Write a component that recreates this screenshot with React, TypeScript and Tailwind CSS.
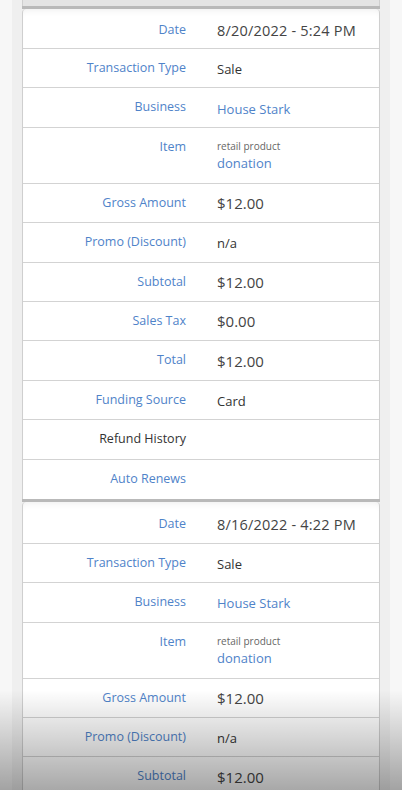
import React from "react";

type Row = { label: string; value?: React.ReactNode; labelDark?: boolean; tall?: boolean };

const money = (v: string) => <span className="text-[15px] text-[#444]">{v}</span>;
const plain = (v: string) => <span className="text-[13px] text-[#333]">{v}</span>;

const rows = (date: string): Row[] => [
  { label: "Date", value: <span className="text-[14.5px] tracking-[0.2px] text-[#444]">{date}</span> },
  { label: "Transaction Type", value: plain("Sale") },
  { label: "Business", value: <span className="text-[13px] text-[#4f83c9]">House Stark</span> },
  {
    label: "Item",
    tall: true,
    value: (
      <div className="flex flex-col leading-none">
        <span className="text-[10px] text-[#666]">retail product</span>
        <span className="mt-[6px] text-[13px] text-[#4f83c9]">donation</span>
      </div>
    ),
  },
  { label: "Gross Amount", value: money("$12.00") },
  { label: "Promo (Discount)", value: plain("n/a") },
  { label: "Subtotal", value: money("$12.00") },
  { label: "Sales Tax", value: money("$0.00") },
  { label: "Total", value: money("$12.00") },
  { label: "Funding Source", value: plain("Card") },
  { label: "Refund History", labelDark: true },
  { label: "Auto Renews" },
];

function Card({ date, first, count }: { date: string; first?: boolean; count?: number }) {
  const all = rows(date);
  const list = count ? all.slice(0, count) : all;
  return (
    <div className="border-t-[3px] border-[#b9b9b9]">
      <div className="rounded-t-[4px] border-x border-[#cfcfcf] bg-white shadow-[inset_0_6px_6px_-4px_rgba(0,0,0,0.06)]">
        {list.map((r, i) => (
          <div
            key={r.label}
            className={
              "flex " +
              (i < all.length - 1 ? "border-b border-[#d3d3d3] " : "") +
              (r.tall
                ? "h-[56px] items-start pt-[13px]"
                : i === 0
                ? first
                  ? "h-[40px] items-center pt-[4px]"
                  : "h-[42px] items-center pt-[3px]"
                : "h-[39.4px] items-center")
            }
          >
            <div
              className={
                "w-[175px] shrink-0 pr-[12px] text-right text-[12.5px] leading-none " +
                (r.labelDark ? "text-[#333]" : "text-[#4f83c9]")
              }
            >
              {r.label}
            </div>
            <div className="pl-[19px] leading-none">{r.value}</div>
          </div>
        ))}
      </div>
    </div>
  );
}

export default function App() {
  return (
    <div
      className="relative h-[790px] overflow-hidden bg-[#f7f7f7] px-[12px]"
      style={{ fontFamily: '"Open Sans", "Noto Sans", sans-serif' }}
    >
      <div className="h-full bg-[#efefef] px-[10px]">
        <div className="h-[6px] border-x border-[#cfcfcf] bg-[#e4e4e4]" />
        <Card date="8/20/2022 - 5:24 PM" first />
        <Card date="8/16/2022 - 4:22 PM" count={7} />
      </div>
      <div className="pointer-events-none absolute inset-x-0 bottom-0 h-[100px] bg-gradient-to-b from-[rgba(0,0,0,0)] to-[rgba(0,0,0,0.34)]" />
    </div>
  );
}
